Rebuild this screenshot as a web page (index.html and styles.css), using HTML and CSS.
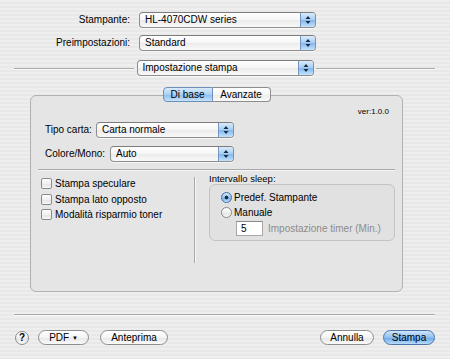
FILE: index.html
```html
<!DOCTYPE html>
<html>
<head>
<meta charset="utf-8">
<link rel="stylesheet" href="styles.css">
</head>
<body>
<div class="dialog">
  <div class="form">
    <div class="lbl">Stampante:</div>
    <div class="popup"><span class="ptext">HL-4070CDW series</span><span class="parrow"><svg width="14" height="14" viewBox="0 0 14 14"><path d="M4.5 6 L7 3 L9.5 6 Z M4.5 8 L7 11 L9.5 8 Z" fill="#1c2c44"/></svg></span></div>
    <div class="lbl">Preimpostazioni:</div>
    <div class="popup"><span class="ptext">Standard</span><span class="parrow"><svg width="14" height="14" viewBox="0 0 14 14"><path d="M4.5 6 L7 3 L9.5 6 Z M4.5 8 L7 11 L9.5 8 Z" fill="#1c2c44"/></svg></span></div>
  </div>

  <div class="section">
    <div class="hline"></div>
    <div class="popup w177"><span class="ptext">Impostazione stampa</span><span class="parrow"><svg width="14" height="14" viewBox="0 0 14 14"><path d="M4.5 6 L7 3 L9.5 6 Z M4.5 8 L7 11 L9.5 8 Z" fill="#1c2c44"/></svg></span></div>
    <div class="hline"></div>
  </div>

  <div class="tabbox">
    <div class="tabs">
      <span class="tab sel">Di base</span><span class="tab last">Avanzate</span>
    </div>
    <div class="panel">
      <div class="ver">ver:1.0.0</div>
      <div class="prow">
        <span class="plbl">Tipo carta:</span>
        <div class="popup w138"><span class="ptext">Carta normale</span><span class="parrow"><svg width="14" height="14" viewBox="0 0 14 14"><path d="M4.5 6 L7 3 L9.5 6 Z M4.5 8 L7 11 L9.5 8 Z" fill="#1c2c44"/></svg></span></div>
      </div>
      <div class="prow second">
        <span class="plbl">Colore/Mono:</span>
        <div class="popup w124"><span class="ptext">Auto</span><span class="parrow"><svg width="14" height="14" viewBox="0 0 14 14"><path d="M4.5 6 L7 3 L9.5 6 Z M4.5 8 L7 11 L9.5 8 Z" fill="#1c2c44"/></svg></span></div>
      </div>
      <div class="psep"></div>
      <div class="lower">
        <div class="left">
          <div class="crow"><span class="check"></span><span>Stampa speculare</span></div>
          <div class="crow"><span class="check"></span><span>Stampa lato opposto</span></div>
          <div class="crow"><span class="check"></span><span>Modalità risparmio toner</span></div>
        </div>
        <div class="vdiv"></div>
        <div class="right">
          <div class="glabel">Intervallo sleep:</div>
          <div class="group">
            <div class="rrow"><span class="radio on"></span><span>Predef. Stampante</span></div>
            <div class="rrow"><span class="radio"></span><span>Manuale</span></div>
            <div class="frow"><span class="field">5</span><span class="dim">Impostazione timer (Min.)</span></div>
          </div>
        </div>
      </div>
    </div>
  </div>

  <div class="bsep"></div>

  <div class="buttons">
    <span class="help">?</span>
    <span class="btn pdf">PDF <span class="tri">▼</span></span>
    <span class="btn prev">Anteprima</span>
    <span class="spacer"></span>
    <span class="btn cancel">Annulla</span>
    <span class="btn print">Stampa</span>
  </div>
</div>
</body>
</html>
```
FILE: styles.css
```css
* { box-sizing: border-box; }
html, body { margin: 0; padding: 0; }
body {
  font-family: "Liberation Sans", Arial, sans-serif;
  font-size: 10px;
  color: #000;
}
.dialog {
  width: 450px;
  height: 359px;
  overflow: hidden;
  background: repeating-linear-gradient(to bottom, #eeeeee 0px, #eeeeee 2px, #e8e8e8 2px, #e8e8e8 4px);
}

/* top form */
.form {
  display: grid;
  grid-template-columns: 130px 177px;
  column-gap: 9px;
  row-gap: 7px;
  padding-top: 12px;
}
.lbl {
  text-align: right;
  line-height: 16px;
  height: 16px;
}

/* popup button */
.popup {
  display: flex;
  height: 16px;
  border: 1px solid #8e8e8e;
  border-top-color: #7c7c7c;
  border-radius: 4px;
  overflow: hidden;
  background: linear-gradient(to bottom, #ffffff 0%, #f5f5f5 50%, #ebebeb 51%, #f9f9f9 100%);
  box-shadow: 0 1px 0 rgba(255,255,255,0.6);
}
.ptext {
  flex: 1;
  padding-left: 5px;
  line-height: 14px;
  white-space: nowrap;
}
.parrow {
  width: 15px;
  height: 14px;
  border-left: 1px solid #7596c0;
  background: linear-gradient(to bottom, #d9ebfc 0%, #a6cdf3 50%, #82b6ec 51%, #c4e3fc 100%);
  display: flex;
}
.w177 { width: 177px; flex: none; }
.w138 { width: 138px; flex: none; }
.w124 { width: 124px; flex: none; }

/* section row */
.section {
  display: flex;
  align-items: center;
  margin-top: 9px;
  padding: 0 15px 0 14px;
}
.hline {
  flex: 1;
  height: 1px;
  background: #aaaaaa;
  box-shadow: 0 1px 0 #f8f8f8;
}
.section .popup { margin: 0 2px 0 3px; }

/* tabs + panel */
.tabbox {
  margin: 11px 47px 0 30px;
}
.tabs {
  display: flex;
  justify-content: center;
  position: relative;
  z-index: 1;
}
.tab {
  height: 15px;
  line-height: 13px;
  text-align: center;
  border: 1px solid #8e8e8e;
  background: linear-gradient(to bottom, #ffffff 0%, #f5f5f5 50%, #ebebeb 51%, #fafafa 100%);
  width: 58px;
}
.tab.sel {
  width: 50px;
  border-color: #6f8fb8;
  border-radius: 4px 0 0 4px;
  background: linear-gradient(to bottom, #d9ebfc 0%, #a9cff4 50%, #8abbed 51%, #c6e3fb 100%);
}
.tab.last {
  border-left: none;
  border-radius: 0 4px 4px 0;
}
.panel {
  margin-top: -7px;
  height: 197px;
  border: 1px solid #b2b2b2;
  border-radius: 6px;
  background: #e5e5e5;
  padding-top: 11px;
}
.ver {
  font-size: 8px;
  line-height: 10px;
  text-align: right;
  padding-right: 13px;
}
.prow {
  display: flex;
  justify-content: space-between;
  align-items: center;
  width: 203px;
  padding-left: 14px;
  margin-top: 5px;
}
.prow.second { margin-top: 8px; }
.plbl { line-height: 16px; }
.psep {
  margin: 7px 7px 0 7px;
  height: 1px;
  background: #a9a9a9;
  box-shadow: 0 1px 0 #f6f6f6;
}

.lower {
  display: flex;
  margin-top: 1px;
}
.left {
  width: 153px;
  margin-left: 10px;
  padding-top: 5px;
}
.crow {
  display: flex;
  align-items: center;
  height: 15.5px;
}
.check {
  width: 11px;
  height: 11px;
  margin-right: 3px;
  border: 1px solid #8a8a8a;
  border-radius: 2px;
  background: linear-gradient(to bottom, #fdfdfd 0%, #f0f0f0 50%, #e2e2e2 51%, #f7f7f7 100%);
}
.vdiv {
  width: 1px;
  height: 86px;
  margin-top: 6px;
  background: #a9a9a9;
  box-shadow: 1px 0 0 #f6f6f6;
}
.right {
  width: 186px;
  margin-left: 14px;
  padding-top: 2px;
}
.glabel {
  font-size: 9.5px;
  line-height: 11px;
}
.group {
  height: 57px;
  border: 1px solid #c4c4c4;
  border-radius: 6px;
  background: #e1e1e1;
  padding: 5px 0 0 11px;
}
.rrow {
  display: flex;
  align-items: center;
  height: 15px;
}
.radio {
  width: 11px;
  height: 11px;
  margin-right: 2px;
  border-radius: 50%;
  border: 1px solid #888888;
  background: linear-gradient(to bottom, #ffffff 0%, #f0f0f0 50%, #e2e2e2 51%, #f8f8f8 100%);
}
.radio.on {
  border-color: #3f6ea4;
  background: radial-gradient(circle at 50% 50%, #1a2a40 0px, #1a2a40 1.6px, transparent 2.2px),
              linear-gradient(to bottom, #d2e7fb 0%, #95c3f0 50%, #70a9e8 51%, #bfe0fb 100%);
}
.frow {
  display: flex;
  align-items: center;
  margin-top: 1px;
  padding-left: 15px;
}
.field {
  width: 27px;
  height: 15px;
  line-height: 13px;
  padding-left: 4px;
  background: #ffffff;
  border: 1px solid #a8a8a8;
  border-top-color: #8a8a8a;
}
.dim {
  color: #8c8c8c;
  margin-left: 5px;
}

/* bottom */
.bsep {
  margin: 22px 15px 0 14px;
  height: 1px;
  background: #aaaaaa;
  box-shadow: 0 1px 0 #f8f8f8;
}
.buttons {
  display: flex;
  align-items: center;
  margin-top: 15px;
  padding: 0 15px;
  height: 15px;
}
.help {
  width: 14px;
  height: 14px;
  border-radius: 50%;
  border: 1px solid #8a8a8a;
  background: linear-gradient(to bottom, #ffffff 0%, #f2f2f2 50%, #e4e4e4 51%, #f8f8f8 100%);
  font-weight: bold;
  font-size: 10px;
  line-height: 12px;
  text-align: center;
}
.btn {
  height: 15px;
  line-height: 13px;
  text-align: center;
  border: 1px solid #8d8d8d;
  border-radius: 8px;
  background: linear-gradient(to bottom, #ffffff 0%, #f4f4f4 50%, #e6e6e6 51%, #fafafa 100%);
  white-space: nowrap;
}
.pdf { width: 51px; margin-left: 9px; }
.tri { font-size: 6px; vertical-align: 1px; }
.prev { width: 68px; margin-left: 11px; }
.spacer { flex: 1; }
.cancel { width: 54px; }
.print {
  width: 52px;
  margin-left: 9px;
  border-color: #4c74a8;
  background: linear-gradient(to bottom, #cfe5fb 0%, #8fc0f0 50%, #6aa6e8 51%, #b8dcfb 100%);
}
```
